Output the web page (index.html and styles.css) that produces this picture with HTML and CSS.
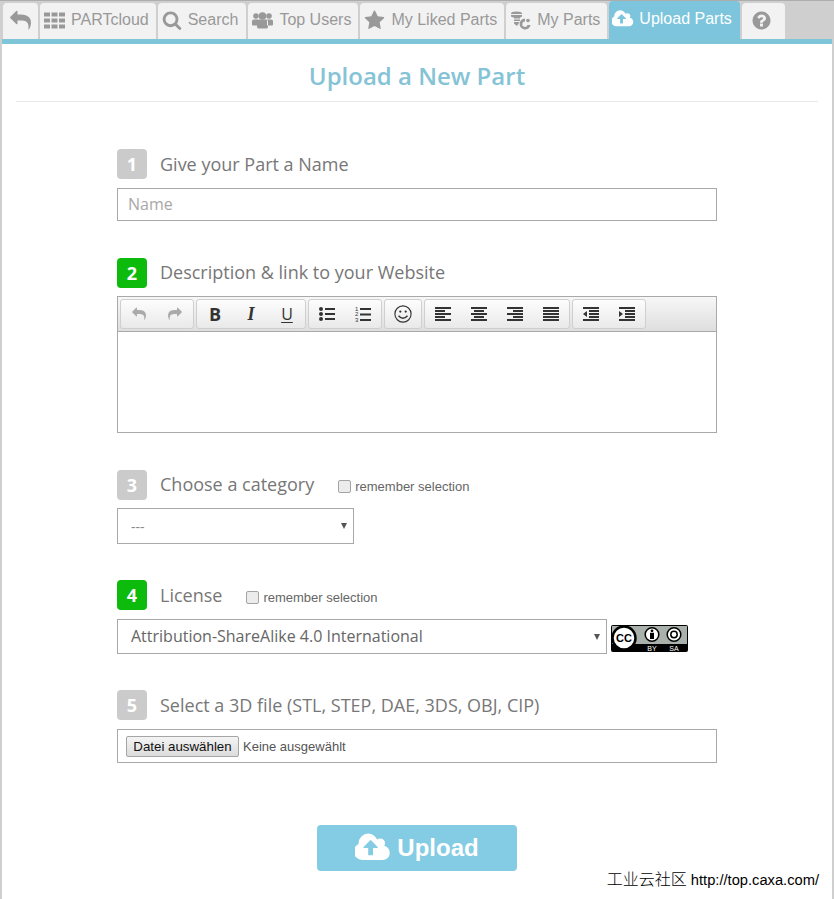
FILE: index.html
```html
<!DOCTYPE html>
<html lang="en">
<head>
<meta charset="utf-8">
<title>Upload a New Part</title>
<link rel="stylesheet" href="styles.css">
</head>
<body>
<nav class="tabs">
  <a class="tab tab-back"><svg class="ti" viewBox="0 0 1792 1792"><path d="M1792 1120q0 166-127 451-3 7-10.500 24t-13.500 30-13 22q-12 17-28 17-15 0-23.500-10t-8.500-25q0-9 2.500-26.500t2.500-23.500q5-68 5-123 0-101-17.500-181t-48.500-138.500-80-101-105.500-69.500-133-42.500-154-21.500-175.500-6h-224v256q0 26-19 45t-45 19-45-19l-512-512q-19-19-19-45t19-45l512-512q19-19 45-19t45 19 19 45v256h224q713 0 875 403 53 134 53 333z"/></svg></a>
  <a class="tab"><svg class="ti" viewBox="0 0 21 18"><path d="M0 1h6v4H0zM7.500 1h6v4h-6zM15 1h6v4h-6zM0 7h6v4H0zM7.500 7h6v4h-6zM15 7h6v4h-6zM0 13h6v4H0zM7.500 13h6v4h-6zM15 13h6v4h-6z"/></svg>PARTcloud</a>
  <a class="tab tab-search"><svg class="ti ti-s" viewBox="0 0 1792 1792"><path d="M1216 832q0-185-131.500-316.500t-316.500-131.500-316.500 131.500-131.500 316.500 131.500 316.500 316.500 131.500 316.500-131.500 131.500-316.500zm512 832q0 52-38 90t-90 38q-54 0-90-38l-343-342q-179 124-399 124-143 0-273.500-55.500t-225-150-150-225-55.500-273.500 55.500-273.500 150-225 225-150 273.500-55.500 273.500 55.500 225 150 150 225 55.500 273.500q0 220-124 399l343 343q37 37 37 90z"/></svg>Search</a>
  <a class="tab"><svg class="ti" viewBox="0 0 21 18"><circle cx="4" cy="4.500" r="2.800"/><circle cx="17" cy="4.500" r="2.800"/><circle cx="10.500" cy="4.500" r="3.800"/><path d="M0 13V9.500Q0 8 2 8h4v6H1q-1 0-1-1zM21 13V9.500Q21 8 19 8h-4v6h5q1 0 1-1zM5 10q0-2 2-2h7q2 0 2 2v5.500q0 1.500-2 1.500H7q-2 0-2-1.500z"/></svg>Top Users</a>
  <a class="tab"><svg class="ti" viewBox="0 0 1792 1792"><path d="M1728 647q0 22-26 48l-363 354 86 500q1 7 1 20 0 21-10.500 35.500t-30.500 14.500q-19 0-40-12l-449-236-449 236q-22 12-40 12-21 0-31.500-14.500t-10.500-35.500q0-6 2-20l86-500-364-354q-25-27-25-48 0-37 56-46l502-73 225-455q19-41 49-41t49 41l225 455 502 73q56 9 56 46z"/></svg>My Liked Parts</a>
  <a class="tab"><svg class="ti" viewBox="0 0 21 18"><path d="M1 2q0-2 5.500-2T12 2v.5H1zM1 3.500h11V5q-1 1-2 1v1H4V6Q2 6 1 5zM4 8h6v1.500H4zM4 10.500h5.500L7 14.500 4 12z"/><path d="M15 7a5.500 5.500 0 1 0 5.500 6.500h-3a2.700 2.700 0 1 1-2.500-3.500z"/><circle cx="18" cy="9" r="1.800"/></svg>My Parts</a>
  <a class="tab tab-active"><svg class="ti ti-w" viewBox="0 0 1920 1792"><path d="M1216 864q0-14-9-23l-352-352q-9-9-23-9t-23 9l-351 351q-10 12-10 24 0 14 9 23t23 9h224v352q0 13 9.500 22.500t22.500 9.500h192q13 0 22.500-9.500t9.500-22.500v-352h224q13 0 22.500-9.500t9.500-22.500zm640 288q0 159-112.500 271.500t-271.500 112.500h-1088q-185 0-316.500-131.500t-131.500-316.500q0-130 70-240t188-165q-2-30-2-43 0-212 150-362t362-150q156 0 285.500 87t188.500 231q71-62 166-62 106 0 181 75t75 181q0 76-41 138 130 31 213.500 135.500t83.500 238.500z"/></svg>Upload Parts</a>
  <a class="tab tab-help"><svg class="ti" viewBox="0 0 1792 1792"><path d="M1024 1376v-192q0-14-9-23t-23-9h-192q-14 0-23 9t-9 23v192q0 14 9 23t23 9h192q14 0 23-9t9-23zm256-672q0-88-55.500-163t-138.500-116-170-41q-243 0-371 213-15 24 8 42l132 100q7 6 19 6 16 0 25-12 53-68 86-92 34-24 86-24 48 0 85.500 26t37.500 59q0 38-20 61t-68 45q-63 28-115.500 86.500t-52.500 125.500v36q0 14 9 23t23 9h192q14 0 23-9t9-23q0-19 21.500-49.500t54.500-49.500q32-18 49-28.500t46-35 44.500-48 28-60.500 12.500-81zm384 192q0 209-103 385.500t-279.500 279.500-385.500 103-385.500-103-279.500-279.500-103-385.500 103-385.500 279.500-279.500 385.500-103 385.500 103 279.500 279.500 103 385.500z"/></svg></a>
</nav>
<main class="panel">
  <h1 class="title">Upload a New Part</h1>
  <form class="form">
    <section class="step step-tight">
      <div class="step-head"><span class="badge">1</span><span class="label">Give your Part a Name</span></div>
      <input class="text-input" type="text" placeholder="Name">
    </section>
    <section class="step step-tight">
      <div class="step-head step-head-near"><span class="badge badge-ok">2</span><span class="label label-up">Description &amp; link to your Website</span></div>
      <div class="editor">
        <div class="toolbar">
          <div class="tb-group">
            <span class="tb-btn tb-off"><svg class="tb-i" viewBox="0 0 1792 1792"><path d="M1792 1120q0 166-127 451-3 7-10.500 24t-13.500 30-13 22q-12 17-28 17-15 0-23.500-10t-8.500-25q0-9 2.500-26.500t2.500-23.500q5-68 5-123 0-101-17.500-181t-48.500-138.500-80-101-105.500-69.500-133-42.500-154-21.500-175.500-6h-224v256q0 26-19 45t-45 19-45-19l-512-512q-19-19-19-45t19-45l512-512q19-19 45-19t45 19 19 45v256h224q713 0 875 403 53 134 53 333z"/></svg></span>
            <span class="tb-btn tb-off"><svg class="tb-i tb-flip" viewBox="0 0 1792 1792"><path d="M1792 1120q0 166-127 451-3 7-10.500 24t-13.500 30-13 22q-12 17-28 17-15 0-23.500-10t-8.500-25q0-9 2.500-26.500t2.500-23.500q5-68 5-123 0-101-17.500-181t-48.500-138.500-80-101-105.500-69.500-133-42.500-154-21.500-175.500-6h-224v256q0 26-19 45t-45 19-45-19l-512-512q-19-19-19-45t19-45l512-512q19-19 45-19t45 19 19 45v256h224q713 0 875 403 53 134 53 333z"/></svg></span>
          </div>
          <div class="tb-group">
            <span class="tb-btn tb-b">B</span>
            <span class="tb-btn tb-it">I</span>
            <span class="tb-btn tb-u">U</span>
          </div>
          <div class="tb-group">
            <span class="tb-btn"><svg class="tb-i" viewBox="0 0 16 16"><circle cx="2" cy="3" r="2"/><circle cx="2" cy="8" r="2"/><circle cx="2" cy="13" r="2"/><path d="M6 2h10v2H6zM6 7h10v2H6zM6 12h10v2H6z"/></svg></span>
            <span class="tb-btn"><svg class="tb-i" viewBox="0 0 16 16"><text class="tb-num" x="0" y="5">1</text><text class="tb-num" x="0" y="10">2</text><text class="tb-num" x="0" y="15.500">3</text><path d="M5 2h11v2H5zM5 7.500h11v2H5zM5 13h11v2H5z"/></svg></span>
          </div>
          <div class="tb-group">
            <span class="tb-btn"><svg class="tb-i tb-smile" viewBox="0 0 16 16"><circle cx="8" cy="8" r="7.200" fill="none" stroke-width="1"/><path d="M4 9.500q4 4.500 8 0" fill="none" stroke-width="1.200"/><circle cx="5.600" cy="5.800" r="1" stroke="none"/><circle cx="10.400" cy="5.800" r="1" stroke="none"/></svg></span>
          </div>
          <div class="tb-group">
            <span class="tb-btn"><svg class="tb-i" viewBox="0 0 16 14"><path d="M0 0h16v2H0zM0 3h10v2H0zM0 6h16v2H0zM0 9h10v2H0zM0 12h16v2H0z"/></svg></span>
            <span class="tb-btn"><svg class="tb-i" viewBox="0 0 16 14"><path d="M0 0h16v2H0zM3 3h10v2H3zM0 6h16v2H0zM3 9h10v2H3zM0 12h16v2H0z"/></svg></span>
            <span class="tb-btn"><svg class="tb-i" viewBox="0 0 16 14"><path d="M0 0h16v2H0zM6 3h10v2H6zM0 6h16v2H0zM6 9h10v2H6zM0 12h16v2H0z"/></svg></span>
            <span class="tb-btn"><svg class="tb-i" viewBox="0 0 16 14"><path d="M0 0h16v2H0zM0 3h16v2H0zM0 6h16v2H0zM0 9h16v2H0zM0 12h16v2H0z"/></svg></span>
          </div>
          <div class="tb-group">
            <span class="tb-btn"><svg class="tb-i" viewBox="0 0 16 14"><path d="M0 0h16v2H0zM6 3h10v2H6zM6 6h10v2H6zM6 9h10v2H6zM0 12h16v2H0zM0 7l4-3v6z"/></svg></span>
            <span class="tb-btn"><svg class="tb-i" viewBox="0 0 16 14"><path d="M0 0h16v2H0zM6 3h10v2H6zM6 6h10v2H6zM6 9h10v2H6zM0 12h16v2H0zM4 7L0 4v6z"/></svg></span>
          </div>
        </div>
        <div class="editor-body"></div>
      </div>
    </section>
    <section class="step">
      <div class="step-head step-head-near"><span class="badge">3</span><span class="label label-up">Choose a category</span>
        <label class="remember"><input class="check" type="checkbox">remember selection</label></div>
      <div class="select-row">
        <div class="select-wrap select-cat"><select class="select select-small"><option>---</option></select></div>
      </div>
    </section>
    <section class="step">
      <div class="step-head"><span class="badge badge-ok">4</span><span class="label">License</span>
        <label class="remember remember-low"><input class="check" type="checkbox">remember selection</label></div>
      <div class="select-row">
        <div class="select-wrap select-lic"><select class="select"><option>Attribution-ShareAlike 4.0 International</option></select></div>
        <svg class="cc" viewBox="0 0 77 27">
          <rect width="77" height="27" rx="2" fill="#000"/>
          <rect x="1" y="1" width="75" height="18" fill="#aab0ab"/>
          <circle cx="13" cy="13" r="11.500" fill="#fff" stroke="#000" stroke-width="2.500"/>
          <text class="cc-c" x="13" y="17">CC</text>
          <circle cx="41" cy="9.500" r="6.800" fill="#fff" stroke="#000" stroke-width="1.500"/>
          <circle cx="41" cy="5.800" r="1.400" fill="#000"/><rect x="39" y="7.800" width="4" height="6.200" fill="#000"/>
          <circle cx="63" cy="9.500" r="6.800" fill="#fff" stroke="#000" stroke-width="1.500"/>
          <circle cx="63" cy="9.500" r="3.200" fill="none" stroke="#000" stroke-width="1.500"/>
          <text class="cc-t" x="41" y="25.500">BY</text><text class="cc-t" x="63" y="25.500">SA</text>
        </svg>
      </div>
    </section>
    <section class="step step-last">
      <div class="step-head"><span class="badge">5</span><span class="label">Select a 3D file (STL, STEP, DAE, 3DS, OBJ, CIP)</span></div>
      <div class="file-box"><button class="file-btn" type="button">Datei auswählen</button><span class="file-name">Keine ausgewählt</span></div>
    </section>
    <button class="upload" type="button"><svg class="upload-i" viewBox="0 0 1920 1792"><path d="M1216 864q0-14-9-23l-352-352q-9-9-23-9t-23 9l-351 351q-10 12-10 24 0 14 9 23t23 9h224v352q0 13 9.500 22.500t22.500 9.500h192q13 0 22.500-9.500t9.500-22.500v-352h224q13 0 22.500-9.500t9.500-22.500zm640 288q0 159-112.500 271.500t-271.500 112.500h-1088q-185 0-316.500-131.500t-131.500-316.500q0-130 70-240t188-165q-2-30-2-43 0-212 150-362t362-150q156 0 285.500 87t188.500 231q71-62 166-62 106 0 181 75t75 181q0 76-41 138 130 31 213.500 135.500t83.500 238.500z"/></svg>Upload</button>
  </form>
</main>
<div class="watermark"><span class="wm-cn">工业云社区</span> http://top.caxa.com/</div>
</body>
</html>
```

FILE: styles.css
```css
* { box-sizing: border-box; }
html, body { margin: 0; height: 899px; overflow: hidden; }
body {
  position: relative;
  background: #cfcfcf;
  border-top: 1px solid #adadad;
  font-family: "Liberation Sans", Arial, sans-serif;
  display: flex;
  flex-direction: column;
}
.tabs { display: flex; gap: 2px; align-items: flex-end; height: 38px; padding-left: 3px; flex: none; }
.tab {
  display: flex; align-items: center; gap: 6px;
  height: 36px; padding: 0 7px 2px 4px;
  background: #f2f2f2; color: #999;
  font-size: 16px; border-radius: 4px 4px 0 0;
}
.tab-back { padding: 0 7px 2px; }
.tab-search { padding-right: 8px; }
.tab-help { width: 43px; justify-content: center; }
.tab-active {
  height: 38px; background: #7cc5dd; color: #fff;
  padding: 0 8px 3px 3px; gap: 5px;
}
.ti { width: 21px; height: 21px; fill: #999; flex: none; }
.ti-s { width: 20px; height: 20px; }
.tab-active .ti { fill: #fff; width: 22px; height: 22px; }
.panel {
  flex: 1; margin: 0 2px; background: #fff;
  border-top: 5px solid #7fc5d8;
  padding: 0 14px;
}
.title {
  margin: 0; height: 58px; padding-top: 4px; border-bottom: 1px solid #e8e8e8;
  font: 600 24px/56px "Open Sans", sans-serif;
  color: #85c3d6; text-align: center;
}
.form { width: 600px; margin: 47px auto 0; }
.step { margin-bottom: 36px; }
.step-tight { margin-bottom: 37px; }
.step-last { margin-bottom: 62px; }
.step-head { display: flex; align-items: center; height: 30px; margin-bottom: 9px; }
.step-head-near { margin-bottom: 8px; }
.badge {
  width: 30px; height: 30px; border-radius: 4px;
  background: #cbcbcb; color: #fff;
  font: 700 18px/30px "Open Sans", sans-serif; text-align: center;
  flex: none;
}
.badge-ok { background: #0cbb0c; }
.label { margin-left: 13px; font: 400 18px/30px "Open Sans", sans-serif; color: #777; }
.label-up { margin-top: -2px; }
.remember {
  display: flex; align-items: center; margin: 3px 0 0 23px;
  font-size: 13px; color: #666;
}
.remember-low { margin-top: 5px; }
.check {
  appearance: none; -webkit-appearance: none;
  width: 13px; height: 13px; margin: 0 4px 0 1px;
  border: 1px solid #a4a4a4; border-radius: 2px; background: #ececec;
}
.text-input {
  display: block; width: 600px; height: 33px; padding: 0 10px 2px;
  border: 1px solid #a9a9a9; background: #fff; outline: 0;
  font: 400 16px "Open Sans", sans-serif; color: #777;
}
.text-input::placeholder { color: #a8a8a8; opacity: 1; }
.editor { width: 600px; height: 137px; border: 1px solid #a9a9a9; }
.toolbar {
  display: flex; gap: 2px; height: 35px; padding: 2px 0 0 2px;
  background: linear-gradient(#f7f7f7, #dedede);
  border-bottom: 1px solid #a9a9a9;
}
.tb-group {
  display: flex; height: 30px; border: 1px solid #cfcfcf; border-radius: 3px;
  background: linear-gradient(#fdfdfd, #e9e9e9);
}
.tb-btn {
  display: flex; align-items: center; justify-content: center;
  width: 36px; height: 28px; color: #333;
  font: 700 18px "Open Sans", sans-serif;
}
.tb-i { width: 16px; height: 16px; fill: #333; }
.tb-off .tb-i { width: 14px; height: 14px; fill: #aaa; }
.tb-flip { transform: scaleX(-1); }
.tb-it { font-family: "Liberation Serif", serif; font-style: italic; }
.tb-u { font-weight: 500; font-size: 16px; text-decoration: underline; text-underline-offset: 2px; }
.tb-num { font: 6px "Liberation Sans", sans-serif; fill: #333; }
.tb-smile { width: 18px; height: 18px; stroke: #333; fill: #333; }
.editor-body { height: 100px; background: #fff; }
.select-row { display: flex; align-items: center; gap: 4px; }
.select-wrap { position: relative; }
.select-wrap::after {
  content: ""; position: absolute; right: 7px; top: 50%; margin-top: -3px;
  border: 3px solid transparent; border-top: 6px solid #555; border-bottom: 0;
}
.select-cat { width: 237px; }
.select-lic { width: 490px; }
.select {
  display: block; width: 100%; height: 35px; padding: 0 13px 2px;
  appearance: none; -webkit-appearance: none; border-radius: 0;
  border: 1px solid #a9a9a9; background: #fff;
  font: 400 16px "Open Sans", sans-serif; color: #666;
}
.select-small { height: 36px; padding-bottom: 0; font-size: 14px; color: #888; }
.cc { width: 77px; height: 27px; flex: none; margin-top: 4px; }
.cc-c { font: 700 11px "Liberation Sans", sans-serif; text-anchor: middle; fill: #000; }
.cc-t { font: 7px "Liberation Sans", sans-serif; text-anchor: middle; fill: #fff; }
.file-box {
  display: flex; align-items: center; height: 34px; padding: 0 8px;
  border: 1px solid #a9a9a9;
}
.file-btn {
  width: 113px; height: 21px; padding: 0;
  border: 1px solid #a5a5a5; border-radius: 2px;
  background: linear-gradient(#f4f4f4, #dcdcdc);
  font: 13.3px "Liberation Sans", sans-serif; color: #111;
}
.file-name { margin-left: 4px; font-size: 13px; color: #555; }
.upload {
  display: flex; align-items: center; justify-content: center; gap: 6px;
  width: 200px; height: 46px; margin: 0 auto; padding: 0;
  border: 0; border-radius: 4px; background: #83cce3; color: #fff;
  font: 700 24px "Liberation Sans", sans-serif;
}
.upload-i { width: 36px; height: 34px; fill: #fff; }
.watermark {
  position: absolute; right: 15px; bottom: 10px;
  font-size: 14.7px; line-height: 18px; color: #000; white-space: nowrap;
}
.wm-cn { font: 200 16px/18px "Noto Sans CJK SC", sans-serif; }
```
